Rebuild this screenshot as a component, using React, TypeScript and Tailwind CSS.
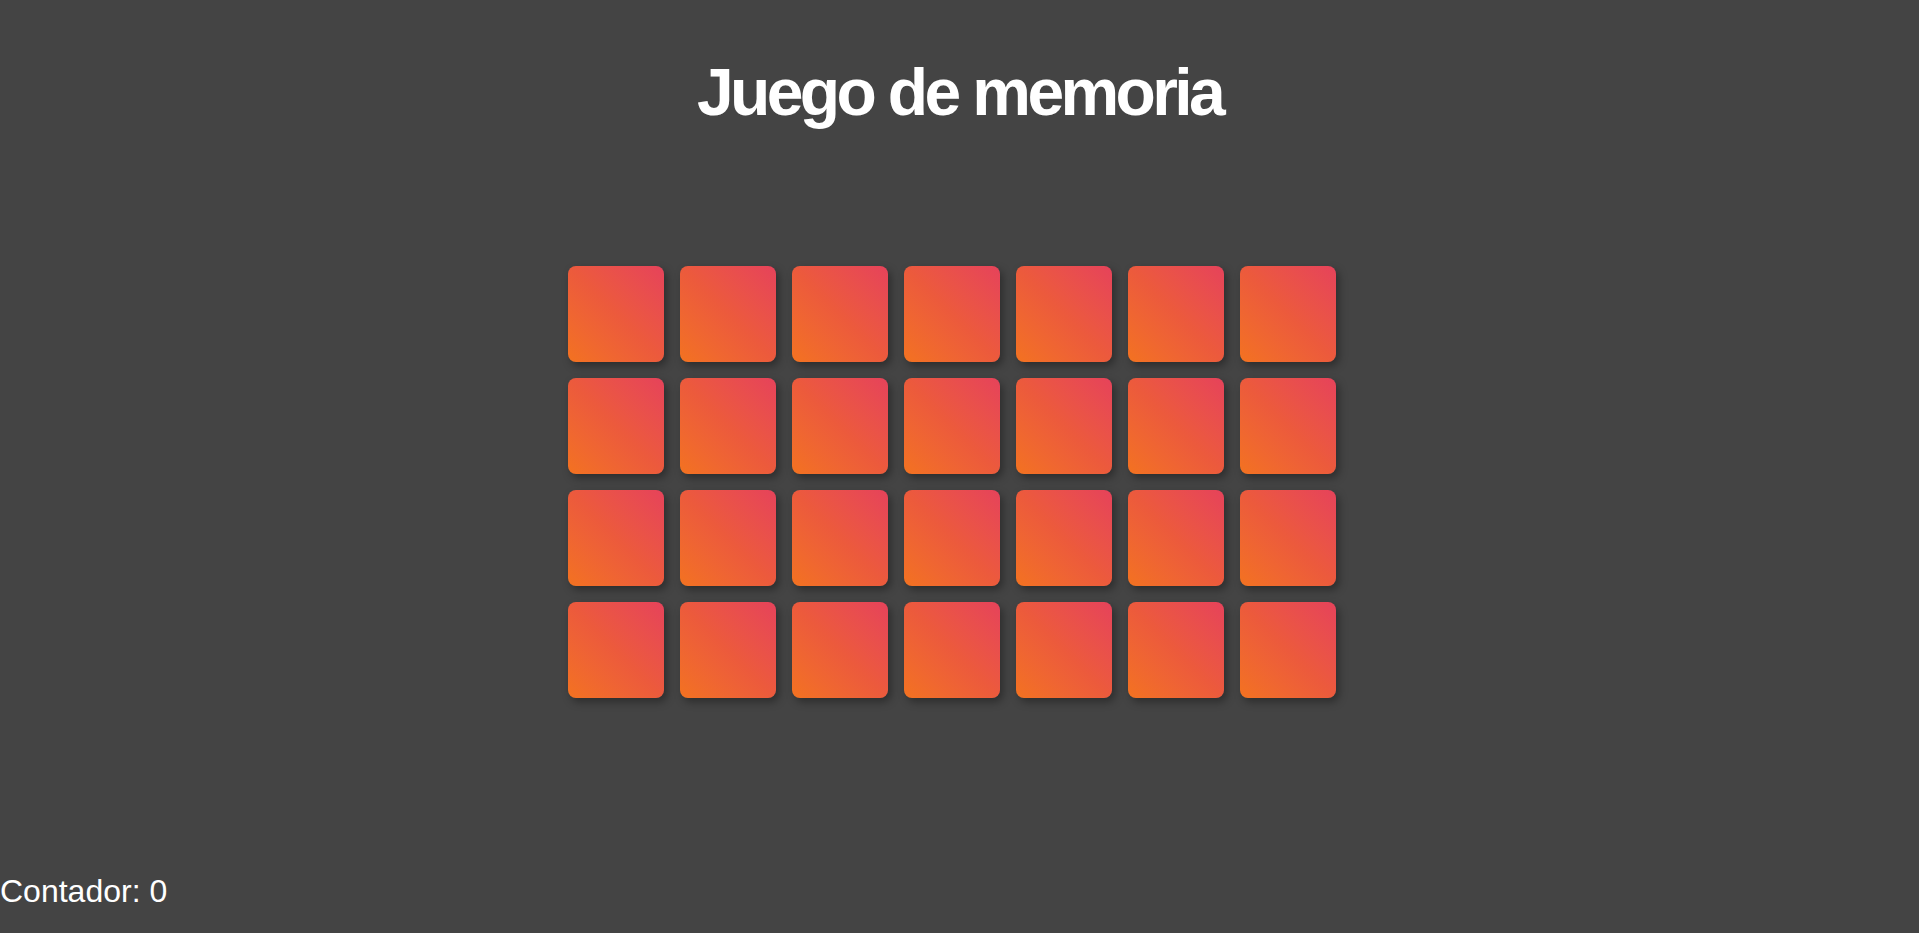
const cards = Array.from({ length: 28 }, (_, i) => i);

export default function App() {
  return (
    <div className="min-h-screen bg-[#444444] text-white flex flex-col" style={{ fontFamily: '"Liberation Sans", Arial, sans-serif' }}>
      {/* Title */}
      <h1 className="mt-[59px] text-center text-[66px] leading-[66px] font-bold tracking-[-0.055em]">
        Juego de memoria
      </h1>

      {/* Board */}
      <div className="mt-[141px] flex justify-center pr-[15px]">
        <div className="grid grid-cols-7 gap-4">
          {cards.map((c) => (
            <button
              key={c}
              className="w-24 h-24 rounded-lg bg-linear-to-tr from-[#f3721f] via-[#ec5a3c] to-[#e6425a] shadow-[3px_4px_8px_rgba(0,0,0,0.35)]"
            />
          ))}
        </div>
      </div>

      {/* Counter */}
      <p className="mt-[177px] text-[32px] leading-8">Contador: 0</p>
    </div>
  );
}
